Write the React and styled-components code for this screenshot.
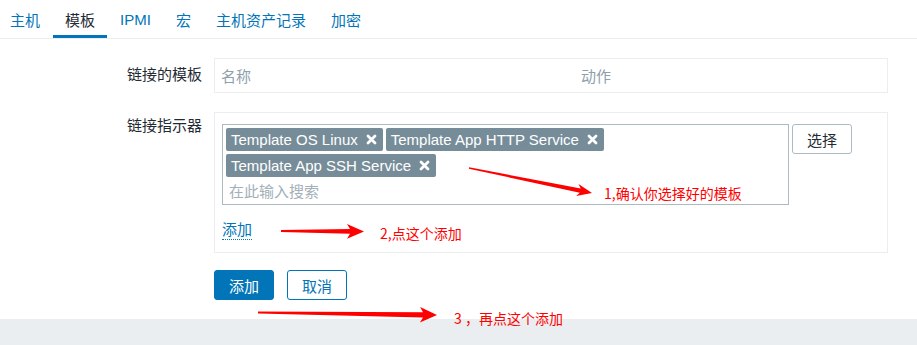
import React from "react";
import styled, { createGlobalStyle } from "styled-components";

const GlobalStyle = createGlobalStyle`
  html, body { margin: 0; padding: 0; background: #ffffff; }
  body { font-family: "Liberation Sans", "Noto Sans CJK SC", Arial, sans-serif; }
  * { box-sizing: border-box; }
`;

const CJK = `"Noto Sans CJK SC", "Liberation Sans", sans-serif`;
const LATIN = `"Liberation Sans", "Noto Sans CJK SC", sans-serif`;
const BLUE = "#0275b8";
const TEXT = "#1f2c33";

const Page = styled.div`
  position: relative;
  width: 917px;
  min-height: 345px;
  display: flex;
  flex-direction: column;
  overflow: hidden;
`;

const Header = styled.div`
  height: 39px;
  border-bottom: 1px solid #ebeef0;
  display: flex;
`;

const Nav = styled.nav`
  display: flex;
  gap: 1px;
  margin-left: -2px;
`;

const Tab = styled.div`
  height: 38px;
  padding: 3px 12px 0;
  display: flex;
  align-items: center;
  font-family: ${(p) => (p.$latin ? LATIN : CJK)};
  font-size: 15px;
  color: ${(p) => (p.$active ? TEXT : BLUE)};
  border-bottom: 3px solid ${(p) => (p.$active ? BLUE : "transparent")};
`;

const Main = styled.div`
  display: flex;
  flex-direction: column;
  padding-bottom: 19px;
`;

const FormRow = styled.div`
  display: grid;
  grid-template-columns: 202px 674px;
  column-gap: 12px;
  margin-top: ${(p) => p.$mt}px;
`;

const Label = styled.div`
  text-align: right;
  font-family: ${CJK};
  font-size: 15px;
  line-height: 20px;
  color: ${TEXT};
  padding-top: ${(p) => p.$pt}px;
`;

const TableBox = styled.div`
  height: 35px;
  border: 1px solid #ebeef0;
  display: grid;
  grid-template-columns: 360px 1fr;
  align-items: center;
  padding-left: 6px;
`;

const HeadCell = styled.div`
  font-family: ${CJK};
  font-size: 15px;
  color: #8fa0ab;
`;

const Panel = styled.div`
  border: 1px solid #ebeef0;
  padding: 11px 7px 12px;
  display: flex;
  flex-direction: column;
  align-items: flex-start;
`;

const SelectLine = styled.div`
  display: flex;
  align-items: flex-start;
  gap: 3px;
`;

const MultiSelect = styled.div`
  width: 567px;
  border: 1px solid #acbbc2;
  padding: 3px 3px 0 3px;
  display: flex;
  flex-wrap: wrap;
  gap: 3px;
`;

const Tag = styled.span`
  height: 23px;
  background: #768d99;
  border-radius: 2px;
  color: #ffffff;
  font-family: ${LATIN};
  font-size: 15px;
  line-height: 23px;
  padding: 0 6px 0 5px;
  display: inline-flex;
  align-items: center;
  gap: 8px;
`;

const SearchInput = styled.input`
  width: 100%;
  height: 24px;
  border: none;
  outline: none;
  padding: 0 3px 4px;
  font-family: ${CJK};
  font-size: 15px;
  color: ${TEXT};
  background: transparent;
  &::placeholder { color: #a3b0b8; }
`;

const AltButton = styled.button`
  width: 60px;
  height: 30px;
  border: 1px solid #acbbc2;
  border-radius: 3px;
  background: #ffffff;
  font-family: ${CJK};
  font-size: 15px;
  color: ${TEXT};
  padding: 0;
`;

const LinkText = styled.a`
  margin-top: 14px;
  font-family: ${CJK};
  font-size: 15px;
  line-height: 20px;
  color: ${BLUE};
  border-bottom: 1px dotted ${BLUE};
  text-decoration: none;
`;

const Buttons = styled.div`
  display: flex;
  gap: 13px;
`;

const Button = styled.button`
  width: 60px;
  height: 30px;
  border-radius: 3px;
  border: 1px solid ${BLUE};
  background: ${(p) => (p.$primary ? BLUE : "#ffffff")};
  color: ${(p) => (p.$primary ? "#ffffff" : BLUE)};
  font-family: ${CJK};
  font-size: 15px;
  padding: 0;
`;

const Footer = styled.div`
  flex: 1;
  background: #ebeef0;
`;

const Overlay = styled.svg`
  position: absolute;
  left: 0;
  top: 0;
  pointer-events: none;
`;

const Note = styled.span`
  position: absolute;
  left: ${(p) => p.$x}px;
  top: ${(p) => p.$y}px;
  font-family: ${CJK};
  font-size: 14px;
  line-height: 20px;
  color: #ff0000;
  white-space: nowrap;
  pointer-events: none;
`;

function RemoveIcon() {
  return (
    <svg width="11" height="11" viewBox="0 0 11 11">
      <path
        d="M2 2 L9 9 M9 2 L2 9"
        stroke="#ffffff"
        strokeWidth="2.8"
        strokeLinecap="round"
        fill="none"
      />
    </svg>
  );
}

function arrowPoints(sx, sy, tx, ty, headLen, headW, w0, w1, notch) {
  const dx = tx - sx;
  const dy = ty - sy;
  const len = Math.hypot(dx, dy);
  const ux = dx / len;
  const uy = dy / len;
  const nx = -uy;
  const ny = ux;
  const bx = tx - ux * headLen;
  const by = ty - uy * headLen;
  const cx = tx - ux * (headLen - notch);
  const cy = ty - uy * (headLen - notch);
  const pts = [
    [sx + (nx * w0) / 2, sy + (ny * w0) / 2],
    [cx + (nx * w1) / 2, cy + (ny * w1) / 2],
    [bx + nx * headW, by + ny * headW],
    [tx, ty],
    [bx - nx * headW, by - ny * headW],
    [cx - (nx * w1) / 2, cy - (ny * w1) / 2],
    [sx - (nx * w0) / 2, sy - (ny * w0) / 2],
  ];
  return pts.map((p) => p.map((v) => v.toFixed(1)).join(",")).join(" ");
}

const arrows = [
  [469, 168, 592, 193, 15, 6.2, 1.4, 4.2, 3],
  [281, 231, 364, 231.5, 17, 7.3, 1.8, 4.8, 3],
  [258, 312.5, 437, 315, 17, 7.8, 1.8, 5.2, 3],
];

const tags = ["Template OS Linux", "Template App HTTP Service", "Template App SSH Service"];
const tabs = [
  { label: "主机" },
  { label: "模板", active: true },
  { label: "IPMI", latin: true },
  { label: "宏" },
  { label: "主机资产记录" },
  { label: "加密" },
];

export default function App() {
  return (
    <>
      <GlobalStyle />
      <Page>
        <Header>
          <Nav>
            {tabs.map((t) => (
              <Tab key={t.label} $active={t.active} $latin={t.latin}>
                {t.label}
              </Tab>
            ))}
          </Nav>
        </Header>
        <Main>
          <FormRow $mt={19}>
            <Label $pt={6}>链接的模板</Label>
            <TableBox>
              <HeadCell>名称</HeadCell>
              <HeadCell>动作</HeadCell>
            </TableBox>
          </FormRow>
          <FormRow $mt={19}>
            <Label $pt={3}>链接指示器</Label>
            <Panel>
              <SelectLine>
                <MultiSelect>
                  {tags.map((t) => (
                    <Tag key={t}>
                      {t}
                      <RemoveIcon />
                    </Tag>
                  ))}
                  <SearchInput placeholder="在此输入搜索" />
                </MultiSelect>
                <AltButton>选择</AltButton>
              </SelectLine>
              <LinkText>添加</LinkText>
            </Panel>
          </FormRow>
          <FormRow $mt={17}>
            <div />
            <Buttons>
              <Button $primary>添加</Button>
              <Button>取消</Button>
            </Buttons>
          </FormRow>
        </Main>
        <Footer />
        <Overlay width="917" height="345" viewBox="0 0 917 345">
          {arrows.map((a, i) => (
            <polygon key={i} points={arrowPoints(...a)} fill="#ff0000" />
          ))}
        </Overlay>
        <Note $x={604} $y={183}>1,确认你选择好的模板</Note>
        <Note $x={380} $y={223}>2,点这个添加</Note>
        <Note $x={454} $y={308}>3 ，再点这个添加</Note>
      </Page>
    </>
  );
}
